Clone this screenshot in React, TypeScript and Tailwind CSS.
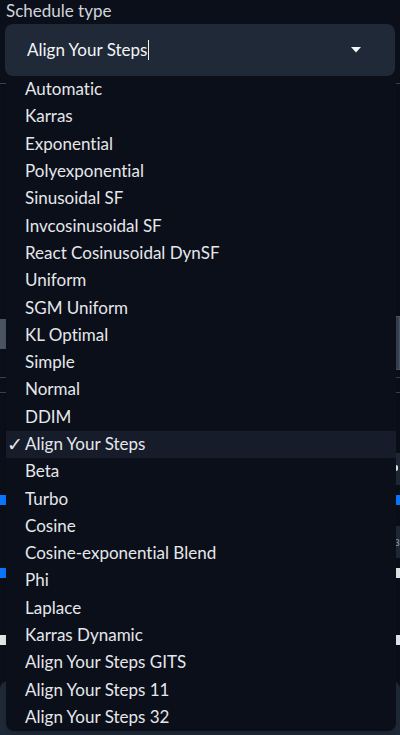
const options = [
  "Automatic",
  "Karras",
  "Exponential",
  "Polyexponential",
  "Sinusoidal SF",
  "Invcosinusoidal SF",
  "React Cosinusoidal DynSF",
  "Uniform",
  "SGM Uniform",
  "KL Optimal",
  "Simple",
  "Normal",
  "DDIM",
  "Align Your Steps",
  "Beta",
  "Turbo",
  "Cosine",
  "Cosine-exponential Blend",
  "Phi",
  "Laplace",
  "Karras Dynamic",
  "Align Your Steps GITS",
  "Align Your Steps 11",
  "Align Your Steps 32",
];

const selected = "Align Your Steps";

export default function App() {
  return (
    <div
      className="relative w-[400px] h-[735px] overflow-hidden bg-[#0b0f19] text-[#e5e7eb] [font-variant-ligatures:none]"
      style={{ fontFamily: "Lato, 'Noto Sans', sans-serif" }}
    >
      {/* page content underneath the open menu */}
      <div className="flex flex-col">
        <label className="h-6 pl-[6px] pt-[1px] text-[17px] leading-5 text-[#d1d5db]">Schedule type</label>
        <div className="mx-[5px] h-[52px] rounded-lg bg-[#1f2937] flex items-center pl-[22px] pr-[34px]">
          <span className="text-[17px] text-[#f3f4f6]">{selected}</span>
          <span className="ml-[1px] w-px h-5 bg-[#f3f4f6]"></span>
          <div className="ml-auto">
            <svg width="10" height="6" viewBox="0 0 10 6">
              <path d="M0 0 L10 0 L5 5.5 Z" fill="#f3f4f6" />
            </svg>
          </div>
        </div>
        <div className="mt-[7px] h-px bg-[#374151]"></div>

        {/* slider panel */}
        <div className="mt-[235px] flex justify-between">
          <div className="w-[10px] h-[30px] bg-[#4b5563] flex justify-end">
            <div className="mt-[6px] w-[4px] h-[20px] rounded-sm bg-[#0ea5e9]"></div>
          </div>
          <div className="w-[8px] h-[54px] -mt-[3px] bg-[#374151] border border-[#4b5563]"></div>
        </div>
        <div className="mt-[7px] h-px bg-[#374151]"></div>
        <div className="mt-[14px] h-px bg-[#374151]"></div>

        {/* sliders */}
        <div className="mt-[60px] flex justify-end">
          <div className="w-[6px] h-[32px] bg-[#1f2937] relative">
            <div className="absolute left-0 top-[12px] w-[4px] h-[6px] bg-[#e5e7eb] rounded-sm"></div>
          </div>
        </div>
        <div className="mt-[10px] flex justify-between">
          <div className="w-[6px] h-[10px] bg-[#0b78ff]"></div>
          <div className="w-[6px] h-[10px] bg-[#0b78ff]"></div>
        </div>
        <div className="mt-[21px] flex justify-end">
          <div className="w-[6px] h-[32px] bg-[#1f2937] flex items-center">
            <span className="text-[10px] text-[#9ca3af] leading-none">3</span>
          </div>
        </div>
        <div className="mt-[10px] flex justify-between">
          <div className="w-[6px] h-[10px] bg-[#0b78ff]"></div>
          <div className="w-[6px] h-[10px] bg-[#e5e7eb]"></div>
        </div>
        <div className="mt-[57px] flex justify-between">
          <div className="w-[6px] h-[10px] bg-[#e5e7eb]"></div>
          <div className="w-[6px] h-[10px] bg-[#e5e7eb]"></div>
        </div>
        <div className="mt-[36px] h-[60px] rounded-lg bg-[#1f2937]"></div>
      </div>

      {/* open options menu */}
      <ul className="absolute left-[6px] top-[76px] w-[390px] rounded-b-lg bg-[#0b0f19] shadow-lg">
        {options.map((opt) => (
          <li
            key={opt}
            className={
              "h-[27.3px] flex items-center pl-[1px] pb-[1px] text-[17px] leading-5 text-[#e5e7eb] " +
              (opt === selected ? "bg-[#161c2a]" : "")
            }
          >
            <span className={"w-[18px] text-[19px] " + (opt === selected ? "visible" : "invisible")}>✓</span>
            <span>{opt}</span>
          </li>
        ))}
      </ul>
    </div>
  );
}
